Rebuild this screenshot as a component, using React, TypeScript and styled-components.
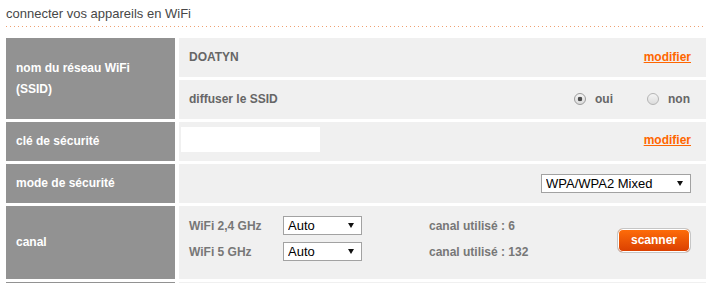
import React from "react";
import styled, { createGlobalStyle } from "styled-components";

const Global = createGlobalStyle`
  html, body { margin: 0; padding: 0; background: #fff; }
  body { font-family: "Liberation Sans", Arial, sans-serif; }
`;

const Page = styled.div`
  padding: 0 15px 0 6px;
  width: 700px;
`;

const Title = styled.h2`
  margin: 0;
  padding-top: 6px;
  font-size: 13px;
  line-height: 16px;
  font-weight: normal;
  color: #474747;
`;

const Dots = styled.div`
  margin-top: 4px;
  width: 697px;
  height: 1px;
  background-image: linear-gradient(to right, #f0a070 1px, transparent 1px);
  background-size: 4px 1px;
`;

const Table = styled.div`
  margin-top: 11px;
  display: grid;
  grid-template-columns: 169px 527px;
  grid-template-rows: 39px 39px 39px 39px 73px 39px;
  column-gap: 4px;
  row-gap: 3px;
`;

const Label = styled.div<{ $span?: number }>`
  grid-row: span ${(p) => p.$span ?? 1};
  background: #929292;
  color: #fff;
  font-size: 12px;
  font-weight: bold;
  line-height: 21px;
  padding: 0 10px;
  display: flex;
  align-items: center;
`;

const Cell = styled.div<{ $pl?: number; $pb?: number; $justify?: string }>`
  background: #f0f0f0;
  display: flex;
  align-items: center;
  justify-content: ${(p) => p.$justify ?? "space-between"};
  padding: 0 15px ${(p) => p.$pb ?? 2}px ${(p) => p.$pl ?? 10}px;
  color: #666;
  font-size: 12px;
  font-weight: bold;
`;

const Link = styled.a`
  color: #ff6600;
  text-decoration: underline;
  font-weight: bold;
  font-size: 12px;
  cursor: pointer;
`;

const Radios = styled.div`
  display: flex;
  align-items: center;
  gap: 34px;
  margin-right: 1px;
`;

const RadioLabel = styled.label`
  display: flex;
  align-items: center;
  gap: 9px;
  color: #666;
`;

const Radio = styled.input`
  appearance: none;
  margin: 0;
  width: 12px;
  height: 12px;
  border-radius: 50%;
  border: 1px solid #b4b4b4;
  background: linear-gradient(#f4f4f4, #dcdcdc);
  &:checked {
    border-color: #9c9c9c;
    background: radial-gradient(circle, #4d4d4d 0 2px, transparent 2.6px),
      linear-gradient(#f4f4f4, #dcdcdc);
  }
`;

const KeyInput = styled.input`
  width: 139px;
  height: 25px;
  box-sizing: border-box;
  border: none;
  background: #fff;
  margin: 0;
  padding: 0 4px;
`;

const SelectWrap = styled.span<{ $w: number }>`
  position: relative;
  display: inline-block;
  width: ${(p) => p.$w}px;
  height: 19px;
`;

const Select = styled.select`
  appearance: none;
  width: 100%;
  height: 100%;
  box-sizing: border-box;
  border: 1px solid #a2a2a2;
  border-radius: 0;
  background: #fff;
  color: #000;
  font-family: "Liberation Sans", Arial, sans-serif;
  font-size: 13px;
  padding: 0 0 0 4px;
  margin: 0;
  outline: none;
`;

const Arrow = styled.span`
  position: absolute;
  right: 8px;
  top: 7px;
  width: 0;
  height: 0;
  border-left: 3px solid transparent;
  border-right: 3px solid transparent;
  border-top: 5px solid #111;
  pointer-events: none;
`;

const Channels = styled.div`
  display: grid;
  grid-template-columns: 94px 146px auto;
  grid-auto-rows: 19px;
  row-gap: 7px;
  align-items: center;
  margin-bottom: 4px;
  color: #777;
`;

const Scan = styled.button`
  width: 74px;
  height: 25px;
  box-sizing: border-box;
  border: 1px solid #c6c6c6;
  border-radius: 6px;
  box-shadow: inset 0 0 0 1px #fff;
  background: linear-gradient(#ff6e0a, #d93e00);
  color: #fff;
  font-family: "Liberation Sans", Arial, sans-serif;
  font-size: 12px;
  font-weight: bold;
  padding: 0 0 1px;
  cursor: pointer;
`;

const Dropdown = ({ w, value, options }: { w: number; value: string; options: string[] }) => (
  <SelectWrap $w={w}>
    <Select defaultValue={value}>
      {options.map((o) => (
        <option key={o}>{o}</option>
      ))}
    </Select>
    <Arrow />
  </SelectWrap>
);

export default function App() {
  return (
    <>
      <Global />
      <Page>
        <Title>connecter vos appareils en WiFi</Title>
        <Dots />
        <Table>
          <Label $span={2}>
            nom du réseau WiFi
            <br />
            (SSID)
          </Label>
          <Cell>
            <span>DOATYN</span>
            <Link>modifier</Link>
          </Cell>
          <Cell>
            <span>diffuser le SSID</span>
            <Radios>
              <RadioLabel>
                <Radio type="radio" name="ssid" defaultChecked />
                oui
              </RadioLabel>
              <RadioLabel>
                <Radio type="radio" name="ssid" />
                non
              </RadioLabel>
            </Radios>
          </Cell>

          <Label>clé de sécurité</Label>
          <Cell $pl={2} $pb={4}>
            <KeyInput type="text" />
            <Link>modifier</Link>
          </Cell>

          <Label>mode de sécurité</Label>
          <Cell $justify="flex-end" $pb={1}>
            <Dropdown w={150} value="WPA/WPA2 Mixed" options={["WPA/WPA2 Mixed", "WPA2", "WEP"]} />
          </Cell>

          <Label>canal</Label>
          <Cell $pb={4}>
            <Channels>
              <span>WiFi 2,4 GHz</span>
              <Dropdown w={79} value="Auto" options={["Auto", "1", "6", "11"]} />
              <span>canal utilisé : 6</span>
              <span>WiFi 5 GHz</span>
              <Dropdown w={79} value="Auto" options={["Auto", "36", "132"]} />
              <span>canal utilisé : 132</span>
            </Channels>
            <Scan>scanner</Scan>
          </Cell>

          <Label />
          <Cell />
        </Table>
      </Page>
    </>
  );
}
